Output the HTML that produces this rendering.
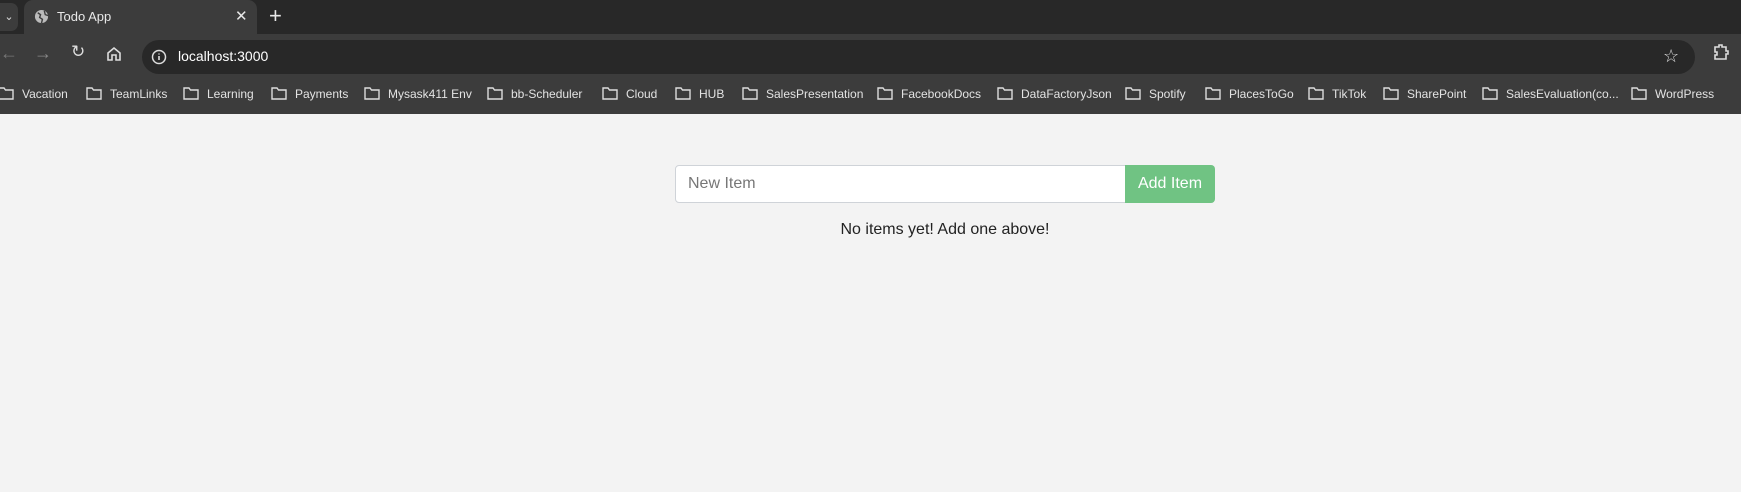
<!DOCTYPE html>
<html><head><style>
*{margin:0;padding:0;box-sizing:border-box}
body{width:1741px;height:492px;background:#f3f3f3;font-family:"Liberation Sans",sans-serif;position:relative;overflow:hidden}
.tabs{position:absolute;top:0;left:0;width:1741px;height:34px;background:#282828}
.tab{position:absolute;left:24px;top:0;width:233px;height:34px;background:#3c3c3c;border-radius:9px 9px 0 0;color:#e8e8e8;font-size:13px}
.tool{position:absolute;top:34px;left:0;width:1741px;height:40px;background:#3c3c3c}
.url{position:absolute;left:142px;top:6px;width:1553px;height:34px;background:#282828;border-radius:17px;color:#fff;font-size:14px}
.bm{position:absolute;top:74px;left:0;width:1741px;height:40px;background:#3c3c3c;color:#e3e3e3;font-size:12px}
.bm span{position:absolute;top:13px;white-space:nowrap}
.bm svg{position:absolute;top:12px}
.in{position:absolute;left:675px;top:165px;width:451px;height:38px;background:#fff;border:1px solid #cfd3d8;border-radius:4px 0 0 4px;color:#777;font-size:16px;padding:9px 12px}
.btn{position:absolute;left:1125px;top:165px;width:90px;height:38px;background:#70c383;border-radius:0 4px 4px 0;color:#fff;font-size:16px;text-align:center;line-height:38px}
.msg{position:absolute;left:0;width:1890px;top:221px;text-align:center;font-size:16px;color:#222}
</style></head><body>
<div class="tabs">
<div style="position:absolute;left:0;top:3px;width:18px;height:28px;background:#3c3c3c;border-radius:0 7px 7px 0;color:#ddd;font-size:11px;line-height:28px;text-align:center">⌄</div>
<div class="tab">
<svg style="position:absolute;left:10px;top:9px" width="15" height="15" viewBox="0 0 16 16"><circle cx="8" cy="8" r="7" fill="#bbb"/><path d="M4 4l3 2-1 3 3 2-1 4M11 2l1 4 3 1" stroke="#3c3c3c" stroke-width="1.5" fill="none"/></svg>
<span style="position:absolute;left:33px;top:9px">Todo App</span>
<span style="position:absolute;left:211px;top:7px;font-size:15px">✕</span>
</div>
<span style="position:absolute;left:269px;top:3px;color:#e8e8e8;font-size:22px">+</span>
</div>
<div class="tool">
<span style="position:absolute;left:0;top:9px;color:#777;font-size:18px">←</span>
<span style="position:absolute;left:34px;top:9px;color:#888;font-size:18px">→</span>
<span style="position:absolute;left:71px;top:8px;color:#ddd;font-size:17px">↻</span>
<svg style="position:absolute;left:106px;top:12px" width="16" height="16" viewBox="0 0 16 16"><path d="M2 7l6-5 6 5v7h-4v-5h-4v5h-4z" fill="none" stroke="#ddd" stroke-width="1.6"/></svg>
<div class="url">
<svg style="position:absolute;left:9px;top:9px" width="16" height="16" viewBox="0 0 16 16"><circle cx="8" cy="8" r="6.5" fill="none" stroke="#ddd" stroke-width="1.5"/><path d="M8 7v4M8 4.5v1" stroke="#ddd" stroke-width="1.6"/></svg>
<span style="position:absolute;left:36px;top:8px">localhost:3000</span>
<span style="position:absolute;left:1521px;top:6px;font-size:18px;color:#ddd">☆</span>
</div>
<svg style="position:absolute;left:1712px;top:9px" width="18" height="18" viewBox="0 0 18 18"><path d="M3 4h4v-2h3v2h4v4h2v3h-2v5h-11v-4h2v-3h-2z" fill="none" stroke="#ddd" stroke-width="1.6"/></svg>
</div>
<div class="bm">
<svg style="left:-2px" width="16" height="14" viewBox="0 0 16 14"><path d="M1 2h5l1.5 2h7.5v9h-14z" fill="none" stroke="#ddd" stroke-width="1.4"/></svg><span style="left:22px">Vacation</span>
<svg style="left:86px" width="16" height="14" viewBox="0 0 16 14"><path d="M1 2h5l1.5 2h7.5v9h-14z" fill="none" stroke="#ddd" stroke-width="1.4"/></svg><span style="left:110px">TeamLinks</span>
<svg style="left:183px" width="16" height="14" viewBox="0 0 16 14"><path d="M1 2h5l1.5 2h7.5v9h-14z" fill="none" stroke="#ddd" stroke-width="1.4"/></svg><span style="left:207px">Learning</span>
<svg style="left:271px" width="16" height="14" viewBox="0 0 16 14"><path d="M1 2h5l1.5 2h7.5v9h-14z" fill="none" stroke="#ddd" stroke-width="1.4"/></svg><span style="left:295px">Payments</span>
<svg style="left:364px" width="16" height="14" viewBox="0 0 16 14"><path d="M1 2h5l1.5 2h7.5v9h-14z" fill="none" stroke="#ddd" stroke-width="1.4"/></svg><span style="left:388px">Mysask411 Env</span>
<svg style="left:487px" width="16" height="14" viewBox="0 0 16 14"><path d="M1 2h5l1.5 2h7.5v9h-14z" fill="none" stroke="#ddd" stroke-width="1.4"/></svg><span style="left:511px">bb-Scheduler</span>
<svg style="left:602px" width="16" height="14" viewBox="0 0 16 14"><path d="M1 2h5l1.5 2h7.5v9h-14z" fill="none" stroke="#ddd" stroke-width="1.4"/></svg><span style="left:626px">Cloud</span>
<svg style="left:675px" width="16" height="14" viewBox="0 0 16 14"><path d="M1 2h5l1.5 2h7.5v9h-14z" fill="none" stroke="#ddd" stroke-width="1.4"/></svg><span style="left:699px">HUB</span>
<svg style="left:742px" width="16" height="14" viewBox="0 0 16 14"><path d="M1 2h5l1.5 2h7.5v9h-14z" fill="none" stroke="#ddd" stroke-width="1.4"/></svg><span style="left:766px">SalesPresentation</span>
<svg style="left:877px" width="16" height="14" viewBox="0 0 16 14"><path d="M1 2h5l1.5 2h7.5v9h-14z" fill="none" stroke="#ddd" stroke-width="1.4"/></svg><span style="left:901px">FacebookDocs</span>
<svg style="left:997px" width="16" height="14" viewBox="0 0 16 14"><path d="M1 2h5l1.5 2h7.5v9h-14z" fill="none" stroke="#ddd" stroke-width="1.4"/></svg><span style="left:1021px">DataFactoryJson</span>
<svg style="left:1125px" width="16" height="14" viewBox="0 0 16 14"><path d="M1 2h5l1.5 2h7.5v9h-14z" fill="none" stroke="#ddd" stroke-width="1.4"/></svg><span style="left:1149px">Spotify</span>
<svg style="left:1205px" width="16" height="14" viewBox="0 0 16 14"><path d="M1 2h5l1.5 2h7.5v9h-14z" fill="none" stroke="#ddd" stroke-width="1.4"/></svg><span style="left:1229px">PlacesToGo</span>
<svg style="left:1308px" width="16" height="14" viewBox="0 0 16 14"><path d="M1 2h5l1.5 2h7.5v9h-14z" fill="none" stroke="#ddd" stroke-width="1.4"/></svg><span style="left:1332px">TikTok</span>
<svg style="left:1383px" width="16" height="14" viewBox="0 0 16 14"><path d="M1 2h5l1.5 2h7.5v9h-14z" fill="none" stroke="#ddd" stroke-width="1.4"/></svg><span style="left:1407px">SharePoint</span>
<svg style="left:1482px" width="16" height="14" viewBox="0 0 16 14"><path d="M1 2h5l1.5 2h7.5v9h-14z" fill="none" stroke="#ddd" stroke-width="1.4"/></svg><span style="left:1506px">SalesEvaluation(co...</span>
<svg style="left:1631px" width="16" height="14" viewBox="0 0 16 14"><path d="M1 2h5l1.5 2h7.5v9h-14z" fill="none" stroke="#ddd" stroke-width="1.4"/></svg><span style="left:1655px">WordPress</span>
</div>
<div class="in">New Item</div>
<div class="btn">Add Item</div>
<div class="msg">No items yet! Add one above!</div>
</body></html>
